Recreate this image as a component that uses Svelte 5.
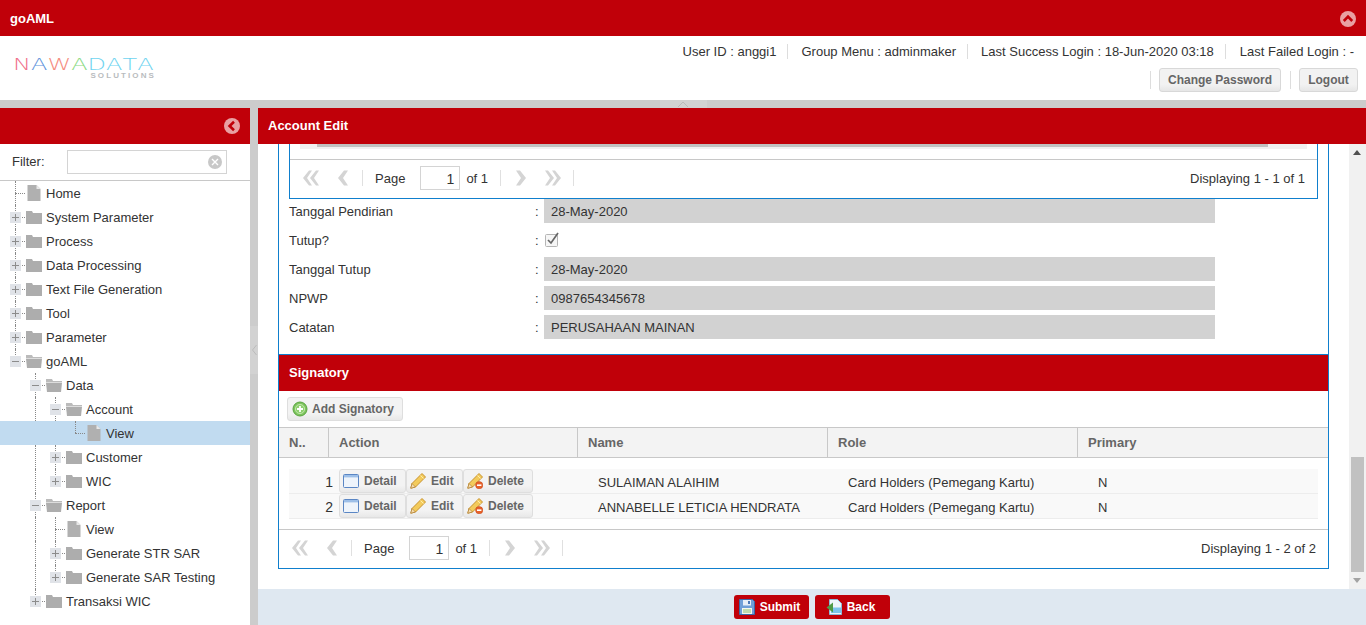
<script>
	const tree = [
		{ cells: ['elbow'], icon: 'file', label: 'Home' },
		{ cells: ['plus'], icon: 'folder', label: 'System Parameter' },
		{ cells: ['plus'], icon: 'folder', label: 'Process' },
		{ cells: ['plus'], icon: 'folder', label: 'Data Processing' },
		{ cells: ['plus'], icon: 'folder', label: 'Text File Generation' },
		{ cells: ['plus'], icon: 'folder', label: 'Tool' },
		{ cells: ['plus'], icon: 'folder', label: 'Parameter' },
		{ cells: ['minus-end'], icon: 'open', label: 'goAML' },
		{ cells: ['empty', 'minus'], icon: 'open', label: 'Data' },
		{ cells: ['empty', 'line', 'minus'], icon: 'open', label: 'Account' },
		{ cells: ['empty', 'line', 'line', 'elbow-end'], icon: 'file', label: 'View', selected: true },
		{ cells: ['empty', 'line', 'plus'], icon: 'folder', label: 'Customer' },
		{ cells: ['empty', 'line', 'plus-end'], icon: 'folder', label: 'WIC' },
		{ cells: ['empty', 'minus'], icon: 'open', label: 'Report' },
		{ cells: ['empty', 'line', 'elbow'], icon: 'file', label: 'View' },
		{ cells: ['empty', 'line', 'plus'], icon: 'folder', label: 'Generate STR SAR' },
		{ cells: ['empty', 'line', 'plus-end'], icon: 'folder', label: 'Generate SAR Testing' },
		{ cells: ['empty', 'plus-end'], icon: 'folder', label: 'Transaksi WIC' }
	];

	const fields = [
		{ label: 'Tanggal Pendirian', value: '28-May-2020' },
		{ label: 'Tutup?', check: true },
		{ label: 'Tanggal Tutup', value: '28-May-2020' },
		{ label: 'NPWP', value: '0987654345678' },
		{ label: 'Catatan', value: 'PERUSAHAAN MAINAN' }
	];

	const signatories = [
		{ no: 1, name: 'SULAIMAN ALAIHIM', role: 'Card Holders (Pemegang Kartu)', primary: 'N' },
		{ no: 2, name: 'ANNABELLE LETICIA HENDRATA', role: 'Card Holders (Pemegang Kartu)', primary: 'N' }
	];

	const logoLetters = [
		['N', '#f0708a'],
		['A', '#5f94dc'],
		['W', '#f58c80'],
		['A', '#88da82'],
		['D', '#6fd4f0'],
		['A', '#6fd4f0'],
		['T', '#6fd4f0'],
		['A', '#6fd4f0']
	];
</script>

{#snippet pager(displaying, total)}
	<div class="pager">
		<svg class="pg first" viewBox="0 0 16 16"><path d="M6 0.5h3L4 8l5 7.5H6L0 8zM13 0.5h3L11 8l5 7.5h-3L7 8z" /></svg>
		<svg class="pg prev" viewBox="0 0 10 16"><path d="M6 0.5h4L5 8l5 7.5H6L0 8z" /></svg>
		<span class="pg-sep first-sep"></span>
		<span class="pg-page">Page</span>
		<span class="pg-input">1</span>
		<span class="pg-of">of {total}</span>
		<span class="pg-sep of-sep"></span>
		<svg class="pg next" viewBox="0 0 10 16"><path d="M0 0.5h4L10 8l-6 7.5H0L5 8z" /></svg>
		<svg class="pg last" viewBox="0 0 16 16"><path d="M0 0.5h3L9 8l-6 7.5H0L5 8zM7 0.5h3L16 8l-6 7.5H7L12 8z" /></svg>
		<span class="pg-sep last-sep"></span>
		<span class="pg-display">{displaying}</span>
	</div>
{/snippet}

{#snippet toolBtn(kind, text)}
	<span class="tool-btn btn-{kind}">
		{#if kind === 'detail'}
			<svg viewBox="0 0 16 16" width="16" height="16"><rect x="0.5" y="1.5" width="15" height="13" rx="1" fill="#fff" stroke="#5a86c4" /><rect x="1" y="2" width="14" height="2.5" fill="#9dbfe8" /><rect x="1" y="5" width="14" height="9" fill="#eef4fb" /></svg>
		{:else}
			<svg viewBox="0 0 16 16" width="16" height="16">
				<path d="M12 0.5 15.5 4 5.5 14 0.8 15.2 2 10.5z" fill="#f3cb5c" stroke="#c8922c" />
				<path d="M2 10.5 5.5 14 0.8 15.2z" fill="#f5dcae" stroke="#a8762c" stroke-width="0.6" />
				<path d="M10.5 2.5 13.5 5.5" stroke="#fdeeb0" fill="none" />
				{#if kind === 'delete'}
					<circle cx="12.2" cy="12.2" r="3.6" fill="#e8622a" stroke="#c9481a" stroke-width="0.6" />
					<rect x="10" y="11.4" width="4.4" height="1.6" fill="#fff" />
				{/if}
			</svg>
		{/if}
		<span>{text}</span>
	</span>
{/snippet}

<div class="page">
	<header class="topbar">
		<span class="app-title">goAML</span>
		<span class="top-toggle">
			<svg viewBox="0 0 16 16" width="16" height="16"><circle cx="8" cy="8" r="8" fill="#e9a0a3" /><path d="M3.8 10 8 5.6 12.2 10" fill="none" stroke="#c00009" stroke-width="2.6" /></svg>
		</span>
	</header>

	<div class="userbar">
		<div class="logo">
			<div class="logo-main">
				{#each logoLetters as [ch, color]}
					<span style="color: {color}">{ch}</span>
				{/each}
			</div>
			<div class="logo-sub">SOLUTIONS</div>
		</div>
		<div class="user-info">
			<div class="info-line">
				<span>User ID : anggi1</span>
				<span>Group Menu : adminmaker</span>
				<span>Last Success Login : 18-Jun-2020 03:18</span>
				<span class="info-last">Last Failed Login : -</span>
			</div>
			<div class="info-actions">
				<span class="action-sep"></span>
				<span class="user-btn change">Change Password</span>
				<span class="action-sep"></span>
				<span class="user-btn logout">Logout</span>
			</div>
		</div>
	</div>

	<div class="strip">
		<span class="strip-tab"><svg viewBox="0 0 10 5" width="10" height="5"><path d="M0 5 5 0l5 5" fill="none" stroke="#bbb" /></svg></span>
	</div>

	<div class="workspace">
		<aside class="side">
			<div class="side-head">
				<svg viewBox="0 0 16 16" width="16" height="16"><circle cx="8" cy="8" r="8" fill="#e9a0a3" /><path d="M10 3.8 5.6 8 10 12.2" fill="none" stroke="#c00009" stroke-width="2.6" /></svg>
			</div>
			<div class="filter">
				<span class="filter-label">Filter:</span>
				<span class="filter-input">
					<svg viewBox="0 0 14 14" width="14" height="14"><circle cx="7" cy="7" r="7" fill="#c8c8c8" /><path d="M4 4l6 6M10 4l-6 6" stroke="#fff" stroke-width="1.4" /></svg>
				</span>
			</div>
			<div class="tree">
				{#each tree as node}
					<div class="tree-row" class:selected={node.selected}>
						{#each node.cells as cell}
							<span class="cell cell-{cell}">
								{#if cell.startsWith('plus') || cell.startsWith('minus')}
									<span class="expander">
										<span class="bar-h"></span>
										{#if cell.startsWith('plus')}<span class="bar-v"></span>{/if}
									</span>
								{/if}
							</span>
						{/each}
						{#if node.icon === 'file'}
							<svg class="node-icon" viewBox="0 0 16 16" width="16" height="16"><path d="M1.5 0h9l4 4v12h-13z" fill="#b0b0b0" /><path d="M10.5 0l4 4h-4z" fill="#e8e8e8" /></svg>
						{:else if node.icon === 'folder'}
							<svg class="node-icon" viewBox="0 0 16 16" width="16" height="16"><path d="M0 2h6l1 2h9v11H0z" fill="#adadad" /></svg>
						{:else}
							<svg class="node-icon" viewBox="0 0 16 16" width="16" height="16"><path d="M0 2h6l1 2h9v1.5H0z" fill="#bbb" /><path d="M0 6h16l-1 9H1z" fill="#adadad" /></svg>
						{/if}
						<span class="node-label">{node.label}</span>
					</div>
				{/each}
			</div>
		</aside>

		<div class="splitter">
			<span class="split-handle"><svg viewBox="0 0 5 10" width="5" height="10"><path d="M4.5 0 .5 5l4 5" fill="none" stroke="#bbb" /></svg></span>
		</div>

		<main class="main">
			<div class="main-head">Account Edit</div>
			<div class="main-body">
				<div class="content">
					<div class="panel">
						<div class="upper">
							<div class="inner-grid">
								<div class="hscroll"><div class="hthumb"></div></div>
								{@render pager('Displaying 1 - 1 of 1', 1)}
							</div>
							<div class="form">
								{#each fields as f}
									<div class="form-row">
										<span class="form-label">{f.label}</span>
										<span class="form-colon">:</span>
										{#if f.check}
											<span class="checkbox"><svg viewBox="0 0 14 16" width="14" height="16"><rect x="0.5" y="2.5" width="12" height="12" rx="1" fill="#f6f6f6" stroke="#b5b5b5" /><path d="M3 8l3 3 7-10" fill="none" stroke="#666" stroke-width="1.7" /></svg></span>
										{:else}
											<span class="form-value">{f.value}</span>
										{/if}
									</div>
								{/each}
							</div>
						</div>
						<section class="signatory">
							<div class="sig-head">Signatory</div>
							<div class="sig-toolbar">
								<span class="add-btn">
									<svg viewBox="0 0 16 16" width="16" height="16"><circle cx="8" cy="8" r="7" fill="#7cc45c" stroke="#5aa440" /><circle cx="8" cy="8" r="4.6" fill="#8ed06e" stroke="#d8f0c8" stroke-width="0.7" /><path d="M8 5v6M5 8h6" stroke="#fff" stroke-width="1.8" /></svg>
									<span>Add Signatory</span>
								</span>
							</div>
							<div class="grid-head">
								<span class="col-no">N..</span>
								<span class="col-action">Action</span>
								<span class="col-name">Name</span>
								<span class="col-role">Role</span>
								<span class="col-primary">Primary</span>
							</div>
							<div class="grid-rows">
								{#each signatories as s}
									<div class="grid-row">
										<span class="cell-no">{s.no}</span>
										<span class="cell-action">
											{@render toolBtn('detail', 'Detail')}
											{@render toolBtn('edit', 'Edit')}
											{@render toolBtn('delete', 'Delete')}
										</span>
										<span class="cell-text">{s.name}</span>
										<span class="cell-text">{s.role}</span>
										<span class="cell-text">{s.primary}</span>
									</div>
								{/each}
							</div>
							{@render pager('Displaying 1 - 2 of 2', 1)}
						</section>
					</div>
				</div>
				<div class="vscroll">
					<svg class="arrow-up" viewBox="0 0 8 5" width="8" height="5"><path d="M0 5 4 0l4 5z" fill="#505050" /></svg>
					<div class="vthumb"></div>
					<svg class="arrow-down" viewBox="0 0 8 5" width="8" height="5"><path d="M0 0 4 5l4-5z" fill="#a3a3a3" /></svg>
				</div>
			</div>
			<footer class="main-foot">
				<span class="foot-btn">
					<svg viewBox="0 0 16 16" width="16" height="16"><path d="M0.5 0.5h13l2 2v13h-15z" fill="#6f9fd8" stroke="#3d68a8" /><rect x="4" y="1" width="8" height="5.5" fill="#e6eef8" /><rect x="9" y="2" width="2" height="3" fill="#4a78b8" /><rect x="3" y="9" width="10" height="6" fill="#f4f8ee" /><path d="M4 11h8M4 13h8" stroke="#8cc070" /></svg>
					<span>Submit</span>
				</span>
				<span class="foot-btn">
					<svg viewBox="0 0 16 16" width="16" height="16"><path d="M3.5 0.5h8l4 4v11h-12z" fill="#eef5fb" stroke="#8cb8d8" /><rect x="5" y="8.5" width="10" height="5.5" fill="#7cc4ec" /><path d="M7 3.5 0.5 8.5 7 13.5z" fill="#4f9a48" /></svg>
					<span>Back</span>
				</span>
			</footer>
		</main>
	</div>
</div>

<style>
	:global(body) {
		margin: 0;
		font-family: "Liberation Sans", Arial, sans-serif;
		font-size: 13px;
		color: #333;
	}

	.page {
		display: flex;
		flex-direction: column;
		height: 625px;
		overflow: hidden;
		background: #fff;
	}

	.topbar {
		display: flex;
		flex: none;
		align-items: center;
		justify-content: space-between;
		height: 36px;
		padding: 0 10px;
		background: #c00009;
		color: #fff;
		font-weight: bold;
	}

	.top-toggle {
		display: flex;
		margin-top: 1px;
	}

	.userbar {
		display: flex;
		flex: none;
		justify-content: space-between;
		height: 64px;
	}

	.logo {
		width: 141px;
		margin: 22px 0 0 13px;
	}

	.logo-main {
		display: flex;
		height: 14px;
		font-family: "DejaVu Sans", sans-serif;
		font-size: 16px;
		font-weight: 200;
		line-height: 14px;
		transform: scaleX(1.5);
		transform-origin: left;
	}

	.logo-sub {
		margin-right: -2px;
		color: #b9bcbe;
		font-size: 8px;
		font-weight: bold;
		letter-spacing: 2.1px;
		line-height: 8px;
		text-align: right;
	}

	.user-info {
		display: flex;
		flex-direction: column;
		align-items: flex-end;
		padding: 8px 8px 0 0;
	}

	.info-line {
		display: flex;
		height: 15px;
		margin-right: 4px;
		line-height: 15px;
	}

	.info-line span + span {
		margin-left: 11px;
		padding-left: 13px;
		border-left: 1px solid #ddd;
	}

	.info-line .info-last {
		padding-left: 14px;
	}

	.info-actions {
		display: flex;
		align-items: center;
		margin-top: 9px;
	}

	.action-sep {
		width: 1px;
		height: 18px;
		background: #ddd;
	}

	.user-btn {
		box-sizing: border-box;
		height: 24px;
		border: 1px solid #d8d8d8;
		border-radius: 3px;
		background: linear-gradient(#f2f2f2, #f2f2f2 70%, #e6e6e6);
		color: #666;
		font-size: 12px;
		font-weight: bold;
		line-height: 22px;
		text-align: center;
	}

	.change {
		width: 122px;
		margin: 0 9px 0 8px;
	}

	.logout {
		width: 59px;
		margin-left: 8px;
	}

	.strip {
		display: flex;
		flex: none;
		justify-content: center;
		height: 8px;
		background: #ccc;
	}

	.strip-tab {
		display: flex;
		align-items: center;
		justify-content: center;
		width: 47px;
		background: #d2d2d2;
	}

	.workspace {
		display: flex;
		flex: 1;
		min-height: 0;
	}

	.side {
		flex: none;
		width: 250px;
		overflow: hidden;
	}

	.side-head {
		display: flex;
		align-items: center;
		justify-content: flex-end;
		height: 36px;
		padding-right: 10px;
		background: #c00009;
	}

	.filter {
		display: flex;
		box-sizing: border-box;
		align-items: center;
		height: 37px;
		padding: 0 0 1px 12px;
		border-bottom: 1px solid #c8c8c8;
	}

	.filter-label {
		width: 55px;
	}

	.filter-input {
		display: flex;
		box-sizing: border-box;
		align-items: center;
		justify-content: flex-end;
		width: 160px;
		height: 24px;
		padding-right: 4px;
		border: 1px solid #d4d4d4;
	}

	.tree-row {
		display: flex;
		align-items: center;
		height: 24px;
		padding-left: 5px;
	}

	.tree-row.selected {
		background: #c1dbf0;
	}

	.cell {
		position: relative;
		flex: none;
		align-self: stretch;
		width: 20px;
	}

	.cell::before,
	.cell::after {
		position: absolute;
		content: "";
	}

	.cell-line::before,
	.cell-elbow::before,
	.cell-plus::before,
	.cell-minus::before {
		top: 0;
		bottom: 0;
		left: 10px;
		border-left: 1px dotted #888;
	}

	.cell-elbow-end::before,
	.cell-plus-end::before,
	.cell-minus-end::before {
		top: 0;
		height: 12px;
		left: 10px;
		border-left: 1px dotted #888;
	}

	.cell-elbow::after,
	.cell-elbow-end::after,
	.cell-plus::after,
	.cell-plus-end::after,
	.cell-minus::after,
	.cell-minus-end::after {
		top: 12px;
		left: 10px;
		width: 10px;
		border-top: 1px dotted #888;
	}

	.selected .cell-line::before {
		display: none;
	}

	.expander {
		position: absolute;
		z-index: 1;
		top: 7px;
		left: 5px;
		width: 11px;
		height: 11px;
		background: #e0e3e8;
	}

	.bar-h,
	.bar-v {
		position: absolute;
		background: #8c8c8c;
	}

	.bar-h {
		top: 5px;
		left: 2px;
		width: 7px;
		height: 1px;
	}

	.bar-v {
		top: 2px;
		left: 5px;
		width: 1px;
		height: 7px;
	}

	.node-icon {
		flex: none;
		margin: 0 4px 0 1px;
	}

	.node-label {
		white-space: nowrap;
	}

	.splitter {
		display: flex;
		flex: none;
		align-items: center;
		width: 8px;
		background: #ccc;
	}

	.split-handle {
		display: flex;
		align-items: center;
		justify-content: center;
		width: 8px;
		height: 48px;
		margin-top: -34px;
		background: #d2d2d2;
	}

	.main {
		display: flex;
		flex: 1;
		flex-direction: column;
		min-width: 0;
	}

	.main-head {
		flex: none;
		height: 36px;
		padding-left: 10px;
		background: #c00009;
		color: #fff;
		font-weight: bold;
		line-height: 35px;
	}

	.main-body {
		display: flex;
		flex: 1;
		min-height: 0;
	}

	.content {
		flex: 1;
		overflow: hidden;
		padding: 0 20px;
	}

	.panel {
		box-sizing: border-box;
		height: 425px;
		border: solid #0f7fcd;
		border-width: 0 1px 1px;
	}

	.upper {
		height: 210px;
		padding: 0 10px;
	}

	.inner-grid {
		box-sizing: border-box;
		height: 55px;
		border: solid #0f7fcd;
		border-width: 0 1px 1px;
	}

	.hscroll {
		height: 5px;
		margin: 0 10px;
		background: #f1f1f1;
	}

	.hthumb {
		width: 951px;
		height: 3px;
		margin-left: 17px;
		background: #c1c1c1;
	}

	.pager {
		display: flex;
		box-sizing: border-box;
		align-items: center;
		height: 39px;
		padding-bottom: 2px;
		border-top: 1px solid #c8c8c8;
		font-size: 13px;
	}

	.inner-grid .pager {
		margin-top: 10px;
	}

	.pg {
		flex: none;
		height: 16px;
		fill: #d4d4d4;
	}

	.first {
		width: 16px;
		margin-left: 13px;
	}

	.prev {
		width: 10px;
		margin-left: 19px;
	}

	.next {
		width: 10px;
		margin-left: 15px;
	}

	.last {
		width: 16px;
		margin-left: 19px;
	}

	.pg-sep {
		flex: none;
		width: 1px;
		height: 16px;
		background: #e0e0e0;
	}

	.first-sep {
		margin-left: 14px;
	}

	.last-sep {
		margin-left: 12px;
	}

	.pg-page {
		margin-left: 12px;
	}

	.pg-input {
		box-sizing: border-box;
		width: 40px;
		height: 24px;
		margin-left: 15px;
		padding-right: 5px;
		border: 1px solid #d4d4d4;
		font-size: 14px;
		line-height: 24px;
		text-align: right;
	}

	.pg-of {
		margin-left: 6px;
	}

	.of-sep {
		margin-left: 12px;
	}

	.pg-display {
		margin-left: auto;
		padding-right: 12px;
	}

	.form-row {
		display: flex;
		align-items: center;
		height: 24px;
		margin-bottom: 5px;
	}

	.form-label {
		width: 246px;
	}

	.form-colon {
		width: 9px;
	}

	.form-value {
		box-sizing: border-box;
		width: 671px;
		height: 24px;
		padding-left: 7px;
		background: #d2d2d2;
		line-height: 26px;
	}

	.checkbox {
		display: flex;
		padding-left: 1px;
	}

	.signatory {
		border-top: 1px solid #0f7fcd;
	}

	.sig-head {
		height: 36px;
		padding-left: 10px;
		background: #c00009;
		color: #fff;
		font-weight: bold;
		line-height: 35px;
	}

	.sig-toolbar {
		display: flex;
		align-items: center;
		height: 36px;
		padding-left: 8px;
	}

	.add-btn,
	.tool-btn {
		display: inline-flex;
		box-sizing: border-box;
		flex: none;
		align-items: center;
		height: 24px;
		border: 1px solid #dedede;
		border-radius: 3px;
		background: linear-gradient(#f3f3f3, #f3f3f3 70%, #e8e8e8);
		color: #666;
		font-size: 12px;
		font-weight: bold;
	}

	.add-btn {
		gap: 4px;
		width: 116px;
		padding-left: 4px;
	}

	.grid-head {
		display: flex;
		box-sizing: border-box;
		height: 31px;
		border: solid #c8c8c8;
		border-width: 1px 0;
		background: #f3f3f3;
		color: #666;
		font-weight: bold;
		line-height: 29px;
	}

	.grid-head span {
		box-sizing: border-box;
		flex: none;
		padding-left: 10px;
		border-right: 1px solid #c8c8c8;
	}

	.col-no {
		width: 50px;
	}

	.col-action {
		width: 249px;
	}

	.col-name,
	.col-role {
		width: 250px;
	}

	.grid-head .col-primary {
		flex: 1;
		border-right: 0;
	}

	.grid-rows {
		box-sizing: border-box;
		height: 71px;
		padding: 11px 10px 0;
	}

	.grid-row {
		display: flex;
		box-sizing: border-box;
		height: 25px;
		border-bottom: 1px solid #ededed;
		background: #f9f9f9;
	}

	.cell-no {
		box-sizing: border-box;
		flex: none;
		width: 50px;
		padding-right: 6px;
		font-size: 14px;
		line-height: 27px;
		text-align: right;
	}

	.cell-action {
		display: flex;
		flex: none;
		width: 249px;
	}

	.tool-btn {
		gap: 5px;
		padding-left: 3px;
	}

	.btn-detail {
		width: 67px;
	}

	.btn-edit {
		width: 57px;
	}

	.btn-delete {
		width: 70px;
	}

	.cell-text {
		box-sizing: border-box;
		flex: none;
		width: 250px;
		padding-left: 10px;
		line-height: 27px;
		white-space: nowrap;
	}

	.cell-text:last-child {
		flex: 1;
	}

	.vscroll {
		position: relative;
		flex: none;
		width: 17px;
		background: #f1f1f1;
	}

	.arrow-up {
		position: absolute;
		top: 6px;
		left: 4px;
	}

	.arrow-down {
		position: absolute;
		bottom: 6px;
		left: 4px;
	}

	.vthumb {
		position: absolute;
		top: 313px;
		left: 2px;
		width: 13px;
		height: 115px;
		background: #c1c1c1;
	}

	.main-foot {
		display: flex;
		flex: none;
		align-items: center;
		justify-content: center;
		gap: 6px;
		height: 36px;
		background: #dfe8f1;
	}

	.foot-btn {
		display: inline-flex;
		box-sizing: border-box;
		align-items: center;
		justify-content: center;
		gap: 5px;
		width: 75px;
		height: 24px;
		padding-right: 4px;
		border-radius: 3px;
		background: #c00009;
		color: #fff;
		font-size: 12px;
		font-weight: bold;
	}
</style>
